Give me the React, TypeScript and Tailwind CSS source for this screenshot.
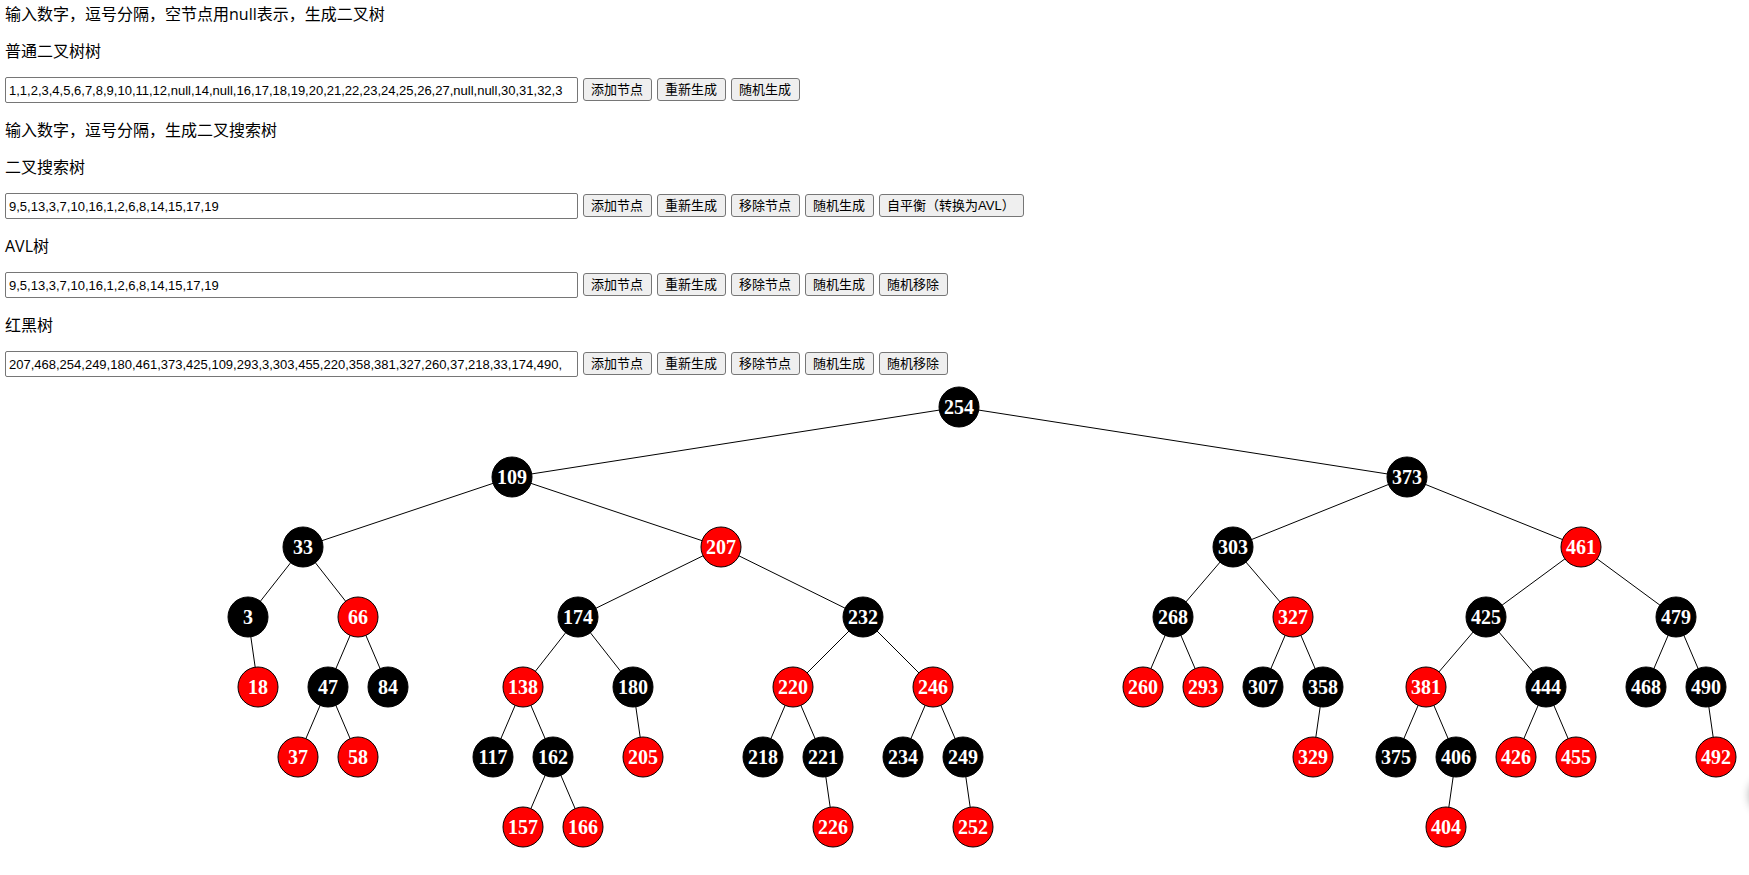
type TreeNode = {
  value: number;
  x: number;
  level: number;
  red?: boolean;
  parent?: number;
};

const NODES: TreeNode[] = [
  { value: 254, x: 959, level: 0 },
  { value: 109, x: 512, level: 1, parent: 254 },
  { value: 373, x: 1407, level: 1, parent: 254 },
  { value: 33, x: 303, level: 2, parent: 109 },
  { value: 207, x: 721, level: 2, parent: 109, red: true },
  { value: 303, x: 1233, level: 2, parent: 373 },
  { value: 461, x: 1581, level: 2, parent: 373, red: true },
  { value: 3, x: 248, level: 3, parent: 33 },
  { value: 66, x: 358, level: 3, parent: 33, red: true },
  { value: 174, x: 578, level: 3, parent: 207 },
  { value: 232, x: 863, level: 3, parent: 207 },
  { value: 268, x: 1173, level: 3, parent: 303 },
  { value: 327, x: 1293, level: 3, parent: 303, red: true },
  { value: 425, x: 1486, level: 3, parent: 461 },
  { value: 479, x: 1676, level: 3, parent: 461 },
  { value: 18, x: 258, level: 4, parent: 3, red: true },
  { value: 47, x: 328, level: 4, parent: 66 },
  { value: 84, x: 388, level: 4, parent: 66 },
  { value: 138, x: 523, level: 4, parent: 174, red: true },
  { value: 180, x: 633, level: 4, parent: 174 },
  { value: 220, x: 793, level: 4, parent: 232, red: true },
  { value: 246, x: 933, level: 4, parent: 232, red: true },
  { value: 260, x: 1143, level: 4, parent: 268, red: true },
  { value: 293, x: 1203, level: 4, parent: 268, red: true },
  { value: 307, x: 1263, level: 4, parent: 327 },
  { value: 358, x: 1323, level: 4, parent: 327 },
  { value: 381, x: 1426, level: 4, parent: 425, red: true },
  { value: 444, x: 1546, level: 4, parent: 425 },
  { value: 468, x: 1646, level: 4, parent: 479 },
  { value: 490, x: 1706, level: 4, parent: 479 },
  { value: 37, x: 298, level: 5, parent: 47, red: true },
  { value: 58, x: 358, level: 5, parent: 47, red: true },
  { value: 117, x: 493, level: 5, parent: 138 },
  { value: 162, x: 553, level: 5, parent: 138 },
  { value: 205, x: 643, level: 5, parent: 180, red: true },
  { value: 218, x: 763, level: 5, parent: 220 },
  { value: 221, x: 823, level: 5, parent: 220 },
  { value: 234, x: 903, level: 5, parent: 246 },
  { value: 249, x: 963, level: 5, parent: 246 },
  { value: 329, x: 1313, level: 5, parent: 358, red: true },
  { value: 375, x: 1396, level: 5, parent: 381 },
  { value: 406, x: 1456, level: 5, parent: 381 },
  { value: 426, x: 1516, level: 5, parent: 444, red: true },
  { value: 455, x: 1576, level: 5, parent: 444, red: true },
  { value: 492, x: 1716, level: 5, parent: 490, red: true },
  { value: 157, x: 523, level: 6, parent: 162, red: true },
  { value: 166, x: 583, level: 6, parent: 162, red: true },
  { value: 226, x: 833, level: 6, parent: 221, red: true },
  { value: 252, x: 973, level: 6, parent: 249, red: true },
  { value: 404, x: 1446, level: 6, parent: 406, red: true },
];

const RADIUS = 20;
const nodeY = (n: TreeNode) => 28 + n.level * 70;
const byValue = new Map(NODES.map((n) => [n.value, n]));

function TreeRow({ id, label, value, actions }: { id: string; label: string; value: string; actions: string[] }) {
  return (
    <section className="flex flex-col gap-[14px] pb-[2px]">
      <label htmlFor={id} className="self-start leading-[23px]">
        {label}
      </label>
      <div className="flex items-start gap-[5px]">
        <input
          id={id}
          type="text"
          defaultValue={value}
          className="h-[26px] w-[573px] rounded-[2px] border border-[#767676] bg-white px-[3px] font-['Liberation_Sans','Noto_Sans_CJK_SC',sans-serif] text-[13px]"
        />
        {actions.map((a) => (
          <button
            key={a}
            type="button"
            className="mt-px h-[23px] rounded-[3px] border border-[#767676] bg-[#efefef] pr-2 pl-[7px] font-['Liberation_Sans','Noto_Sans_CJK_SC',sans-serif] text-[13px] leading-[21px] whitespace-nowrap"
          >
            {a}
          </button>
        ))}
      </div>
    </section>
  );
}

function TreeCanvas() {
  return (
    <svg className="block h-[480px] w-full" role="img" aria-label="红黑树">
      {NODES.map((n) => {
        const p = n.parent === undefined ? undefined : byValue.get(n.parent);
        return p ? (
          <line key={n.value} x1={p.x} y1={nodeY(p)} x2={n.x} y2={nodeY(n)} stroke="#000" strokeWidth="1" />
        ) : null;
      })}
      {NODES.map((n) => (
        <g key={n.value}>
          <circle cx={n.x} cy={nodeY(n)} r={RADIUS} fill={n.red ? "#f00" : "#000"} stroke="#000" strokeWidth="1" />
          <text
            x={n.x}
            y={nodeY(n) + 7}
            textAnchor="middle"
            fill="#fff"
            className="font-['Liberation_Serif',serif] text-[20px] font-bold"
          >
            {n.value}
          </text>
        </g>
      ))}
    </svg>
  );
}

export default function App() {
  return (
    <main className="overflow-x-hidden bg-white font-['Open_Sans','Noto_Sans_CJK_SC',sans-serif] text-base text-black">
      <div className="flex flex-col gap-[14px] pt-[3px] pl-[5px]">
        <p className="leading-[23px]">输入数字，逗号分隔，空节点用null表示，生成二叉树</p>
        <TreeRow
          id="binary-tree"
          label="普通二叉树树"
          value="1,1,2,3,4,5,6,7,8,9,10,11,12,null,14,null,16,17,18,19,20,21,22,23,24,25,26,27,null,null,30,31,32,3"
          actions={["添加节点", "重新生成", "随机生成"]}
        />
        <p className="leading-[23px]">输入数字，逗号分隔，生成二叉搜索树</p>
        <TreeRow
          id="search-tree"
          label="二叉搜索树"
          value="9,5,13,3,7,10,16,1,2,6,8,14,15,17,19"
          actions={["添加节点", "重新生成", "移除节点", "随机生成", "自平衡（转换为AVL）"]}
        />
        <TreeRow
          id="avl-tree"
          label="AVL树"
          value="9,5,13,3,7,10,16,1,2,6,8,14,15,17,19"
          actions={["添加节点", "重新生成", "移除节点", "随机生成", "随机移除"]}
        />
        <TreeRow
          id="red-black-tree"
          label="红黑树"
          value="207,468,254,249,180,461,373,425,109,293,3,303,455,220,358,381,327,260,37,218,33,174,490,"
          actions={["添加节点", "重新生成", "移除节点", "随机生成", "随机移除"]}
        />
      </div>
      <TreeCanvas />
      {/* Docked round handle: only its shadow reaches into the window */}
      <div
        aria-hidden="true"
        className="fixed -right-10 bottom-[60px] size-10 rounded-full bg-white shadow-[0_0_8px_rgba(0,0,0,0.3)]"
      />
    </main>
  );
}
